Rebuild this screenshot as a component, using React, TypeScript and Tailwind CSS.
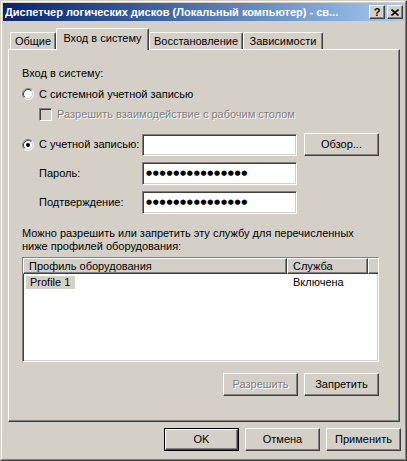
import React from 'react';

const raised =
  'flex items-center justify-center bg-[#d4d0c8] border border-t-white border-l-white border-r-[#404040] border-b-[#404040] shadow-[inset_-1px_-1px_0_#808080]';
const sunken =
  'border border-t-[#808080] border-l-[#808080] border-r-white border-b-white shadow-[inset_1px_1px_0_#404040,inset_-1px_-1px_0_#d4d0c8]';
const disabledText = 'text-[#808080] [text-shadow:1px_1px_0_#ffffff]';

function Radio({ checked = false }: { checked?: boolean }) {
  return (
    <svg width="12" height="12" viewBox="0 0 12 12" className="shrink-0">
      <circle cx="6" cy="6" r="4.5" fill="#ffffff" />
      <path d="M2.11 9.89 A5.5 5.5 0 0 1 9.89 2.11" stroke="#808080" fill="none" />
      <path d="M9.89 2.11 A5.5 5.5 0 0 1 2.11 9.89" stroke="#ffffff" fill="none" />
      <path d="M2.82 9.18 A4.5 4.5 0 0 1 9.18 2.82" stroke="#404040" fill="none" />
      <path d="M9.18 2.82 A4.5 4.5 0 0 1 2.82 9.18" stroke="#d4d0c8" fill="none" />
      {checked && <circle cx="6" cy="6" r="2" fill="#000000" />}
    </svg>
  );
}

function Tab({ label, width, selected = false }: { label: string; width: string; selected?: boolean }) {
  if (selected) {
    return (
      <div
        className={`${width} h-[22px] -mb-px relative z-10 bg-[#d4d0c8] flex justify-center pt-[3px] rounded-t-[2px] border-t border-l border-t-white border-l-white border-r border-r-[#404040] shadow-[inset_-1px_0_0_#808080]`}
      >
        {label}
      </div>
    );
  }
  return (
    <div
      className={`${width} h-[17px] bg-[#d4d0c8] flex justify-center pt-[2px] rounded-t-[2px] border-t border-l border-t-white border-l-white border-r border-r-[#404040] shadow-[inset_-1px_0_0_#808080]`}
    >
      {label}
    </div>
  );
}

function Password() {
  return (
    <div className={`${sunken} w-[155px] h-[23px] bg-white flex items-center pl-[3px]`}>
      <span className="font-['DejaVu_Sans',sans-serif] text-[7px] tracking-[0.7px] leading-none">
        ●●●●●●●●●●●●●●●
      </span>
    </div>
  );
}

export default function App() {
  return (
    <div className="w-[407px] h-[461px] bg-[#d4d0c8] border border-t-[#d4d0c8] border-l-[#d4d0c8] border-r-[#404040] border-b-[#404040] font-['Liberation_Sans',sans-serif] text-[11px] text-black leading-[13px] select-none">
      <div className="h-full border border-t-white border-l-white border-r-[#808080] border-b-[#808080] p-px flex flex-col">
        {/* Title bar */}
        <div className="h-[18px] shrink-0 flex items-center bg-linear-to-r from-[#0a246a] to-[#a6caf0] pl-[2px] pr-px">
          <span className="flex-1 text-white font-bold whitespace-nowrap overflow-hidden">
            Диспетчер логических дисков (Локальный компьютер) - св...
          </span>
          <div className={`${raised} w-[16px] h-[14px] font-bold text-[11px] leading-none`}>?</div>
          <div className={`${raised} w-[16px] h-[14px] ml-[2px]`}>
            <svg width="8" height="7" viewBox="0 0 8 7">
              <path d="M0.5 0.5 L7.5 6.5 M7.5 0.5 L0.5 6.5" stroke="#000000" strokeWidth="1.6" />
            </svg>
          </div>
        </div>

        {/* Tabs */}
        <div className="ml-[5px] mt-[7px] w-[392px] h-[21px] flex items-end pl-[2px]">
          <Tab label="Общие" width="w-[46px]" />
          <Tab label="Вход в систему" width="w-[93px]" selected />
          <Tab label="Восстановление" width="w-[94px]" />
          <Tab label="Зависимости" width="w-[80px]" />
        </div>

        {/* Tab panel */}
        <div className="ml-[5px] w-[392px] h-[373px] shrink-0 border border-t-white border-l-white border-r-[#404040] border-b-[#404040] shadow-[inset_-1px_-1px_0_#808080] pl-[13px] flex flex-col">
          <div className="mt-[16px] h-[14px] flex items-center">Вход в систему:</div>

          <div className="mt-[7px] h-[14px] flex items-center gap-[5px]">
            <Radio />
            <span>С системной учетной записью</span>
          </div>

          <div className="mt-[6px] h-[14px] flex items-center gap-[5px] pl-[17px]">
            <div className={`${sunken} w-[13px] h-[13px] bg-[#d4d0c8] shrink-0`} />
            <span className={disabledText}>Разрешить взаимодействие с рабочим столом</span>
          </div>

          <div className="mt-[12px] h-[23px] flex items-center">
            <Radio checked />
            <span className="ml-[5px] w-[103px]">С учетной записью:</span>
            <div className={`${sunken} w-[155px] h-[22px] bg-white`} />
            <div className={`${raised} ml-[7px] w-[75px] h-[23px]`}>Обзор...</div>
          </div>

          <div className="mt-[6px] h-[23px] flex items-center pl-[17px]">
            <span className="w-[103px]">Пароль:</span>
            <Password />
          </div>

          <div className="mt-[6px] h-[23px] flex items-center pl-[17px]">
            <span className="w-[103px]">Подтверждение:</span>
            <Password />
          </div>

          <div className="mt-[13px]">
            Можно разрешить или запретить эту службу для перечисленных
            <br />
            ниже профилей оборудования:
          </div>

          {/* Hardware profiles list */}
          <div className={`${sunken} mt-[4px] w-[357px] h-[105px] bg-white flex flex-col`}>
            <div className="h-[16px] flex shrink-0">
              <div className="w-[264px] bg-[#d4d0c8] border border-t-white border-l-white border-r-[#404040] border-b-[#404040] shadow-[inset_-1px_-1px_0_#808080] pl-[5px] flex items-center">
                Профиль оборудования
              </div>
              <div className="w-[81px] bg-[#d4d0c8] border border-t-white border-l-white border-r-[#404040] border-b-[#404040] shadow-[inset_-1px_-1px_0_#808080] pl-[5px] flex items-center">
                Служба
              </div>
              <div className="flex-1 bg-[#d4d0c8] border border-t-white border-l-white border-b-[#404040] border-r-0 shadow-[inset_0_-1px_0_#808080]" />
            </div>
            <div className="mt-px h-[14px] flex items-center">
              <div className="w-[264px] pl-[3px]">
                <span className="inline-block bg-[#d4d0c8] pl-[4px] pr-[5px]">Profile 1</span>
              </div>
              <div className="pl-[6px]">Включена</div>
            </div>
          </div>

          <div className="mt-[11px] w-[357px] flex justify-end gap-[6px]">
            <div className={`${raised} w-[75px] h-[23px]`}>
              <span className={disabledText}>Разрешить</span>
            </div>
            <div className={`${raised} w-[75px] h-[23px]`}>Запретить</div>
          </div>
        </div>

        {/* Dialog buttons */}
        <div className="mt-[6px] flex justify-end gap-[6px] pr-[3px]">
          <div className="w-[75px] h-[23px] border border-black flex">
            <div className={`${raised} flex-1`}>OK</div>
          </div>
          <div className={`${raised} w-[75px] h-[23px]`}>Отмена</div>
          <div className={`${raised} w-[75px] h-[23px]`}>Применить</div>
        </div>
      </div>
    </div>
  );
}
